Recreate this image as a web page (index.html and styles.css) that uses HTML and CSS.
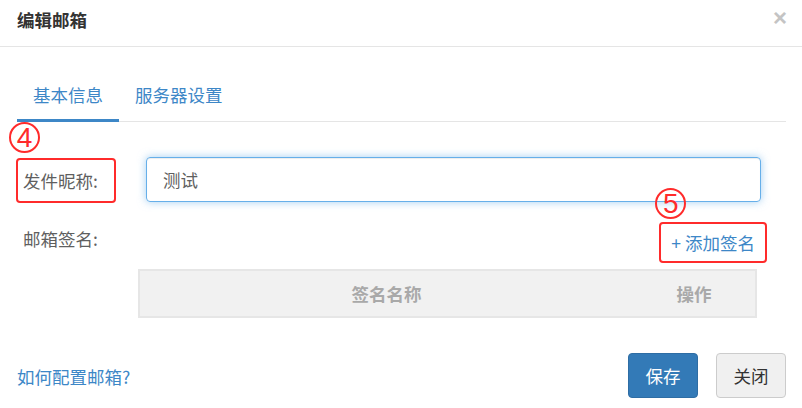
FILE: index.html
```html
<!DOCTYPE html>
<html>
    <head>
        <meta charset="utf-8">
        <title>编辑邮箱</title>
        <link rel="stylesheet" href="styles.css">
    </head>
    <body>
        <div class="modal">
            <div class="modal-header">
                <span class="modal-title">编辑邮箱</span>
                <span class="modal-close">&times;</span>
            </div>
            <div class="modal-body">
                <div class="nav-tabs">
                    <span class="tab active">基本信息</span>
                    <span class="tab">服务器设置</span>
                </div>
                <div class="form-row row-name">
                    <label class="form-label marked">
                        <span class="mark mark-4">4</span>
                        发件昵称:
                    </label>
                    <div class="form-control">测试</div>
                </div>
                <div class="form-row row-sign">
                    <label class="form-label">邮箱签名:</label>
                    <span class="add-link">
                        <span class="mark mark-5">5</span>
                        + 添加签名
                    </span>
                </div>
                <div class="sign-table">
                    <span class="col-name">签名名称</span>
                    <span class="col-op">操作</span>
                </div>
            </div>
            <div class="modal-footer">
                <a class="help-link">如何配置邮箱?</a>
                <div class="btns">
                    <span class="btn btn-primary">保存</span>
                    <span class="btn btn-default">关闭</span>
                </div>
            </div>
        </div>
    </body>
</html>
```

FILE: styles.css
```css
body {
    margin: 0;
    background-color: #fff;
    font-family: "Noto Sans CJK SC", "Liberation Sans", sans-serif;
    font-size: 17.5px;
    line-height: 22px;
    color: #5f5f5f;
}
.modal {
    width: 802px;
    height: 408px;
}
.modal-header {
    padding: 9px 17px 0 17px;
    box-sizing: border-box;
    height: 47px;
    border-bottom: 1px solid #e5e5e5;
    display: flex;
    justify-content: space-between;
    align-items: flex-start;
}
.modal-title {
    font-weight: bold;
    color: #333;
}
.modal-close {
    font-family: "Liberation Sans", sans-serif;
    font-size: 24px;
    font-weight: bold;
    line-height: 18px;
    color: #c4c4c4;
    margin-right: -2px;
}
.modal-body {
    padding: 0 16px 0 17px;
}
.nav-tabs {
    display: flex;
    padding-top: 37px;
    border-bottom: 1px solid #e5e5e5;
}
.tab {
    padding: 0 16px 13px 16px;
    border-bottom: 3px solid transparent;
    margin-bottom: -1px;
    color: #3d87c7;
}
.tab.active {
    border-bottom-color: #3d87c7;
}
.form-row {
    display: flex;
}
.row-name {
    margin-top: 34px;
    align-items: center;
}
.form-label {
    position: relative;
    width: 100px;
    box-sizing: border-box;
    margin-left: -1px;
    padding: 0 0 0 5px;
    border: 2px solid transparent;
    border-radius: 4px;
}
.row-name .form-label {
    height: 45px;
    line-height: 41px;
    margin-top: 2px;
}
.form-label.marked {
    border-color: #ff2b2b;
}
.form-control {
    flex: 1;
    height: 45px;
    box-sizing: border-box;
    margin: 0 25px 0 30px;
    padding: 0 16px;
    line-height: 43px;
    border: 1px solid #66afe9;
    border-radius: 4px;
    box-shadow: inset 0 1px 1px rgba(0, 0, 0, .075), 0 0 8px rgba(102, 175, 233, .6);
}
.row-sign {
    margin-top: 19px;
    height: 41px;
    justify-content: space-between;
}
.row-sign .form-label {
    padding-top: 4px;
}
.add-link {
    position: relative;
    height: 41px;
    box-sizing: border-box;
    margin-right: 19px;
    padding: 8px 10px 0 10px;
    border: 2px solid #ff2b2b;
    border-radius: 4px;
    color: #3d87c7;
}
.mark {
    position: absolute;
    width: 27px;
    height: 27px;
    border: 2px solid #ff2b2b;
    border-radius: 50%;
    color: #ff2b2b;
    font-family: "Liberation Sans", sans-serif;
    font-size: 28px;
    line-height: 28px;
    text-align: center;
}
.mark-4 {
    left: -9px;
    top: -38px;
}
.mark-5 {
    left: -6px;
    top: -36px;
}
.sign-table {
    display: flex;
    margin: 6px 29px 0 121px;
    height: 49px;
    box-sizing: border-box;
    border: 2px solid #e6e6e6;
    background-color: #f1f1f1;
    font-weight: bold;
    color: #a9a9a9;
    line-height: 45px;
    text-align: center;
}
.col-name {
    width: 493px;
}
.col-op {
    flex: 1;
}
.modal-footer {
    display: flex;
    justify-content: space-between;
    align-items: center;
    margin-top: 35px;
    padding: 0 16px 0 17px;
}
.help-link {
    color: #3d87c7;
    margin-top: 3px;
}
.btns {
    display: flex;
    gap: 18px;
}
.btn {
    width: 70px;
    height: 45px;
    box-sizing: border-box;
    border: 1px solid #ccc;
    border-radius: 4px;
    line-height: 43px;
    text-align: center;
    color: #333;
}
.btn-primary {
    background-color: #337ab7;
    border-color: #2e6da4;
    color: #fff;
}
.btn-default {
    background-color: #f0f0f0;
}
```
